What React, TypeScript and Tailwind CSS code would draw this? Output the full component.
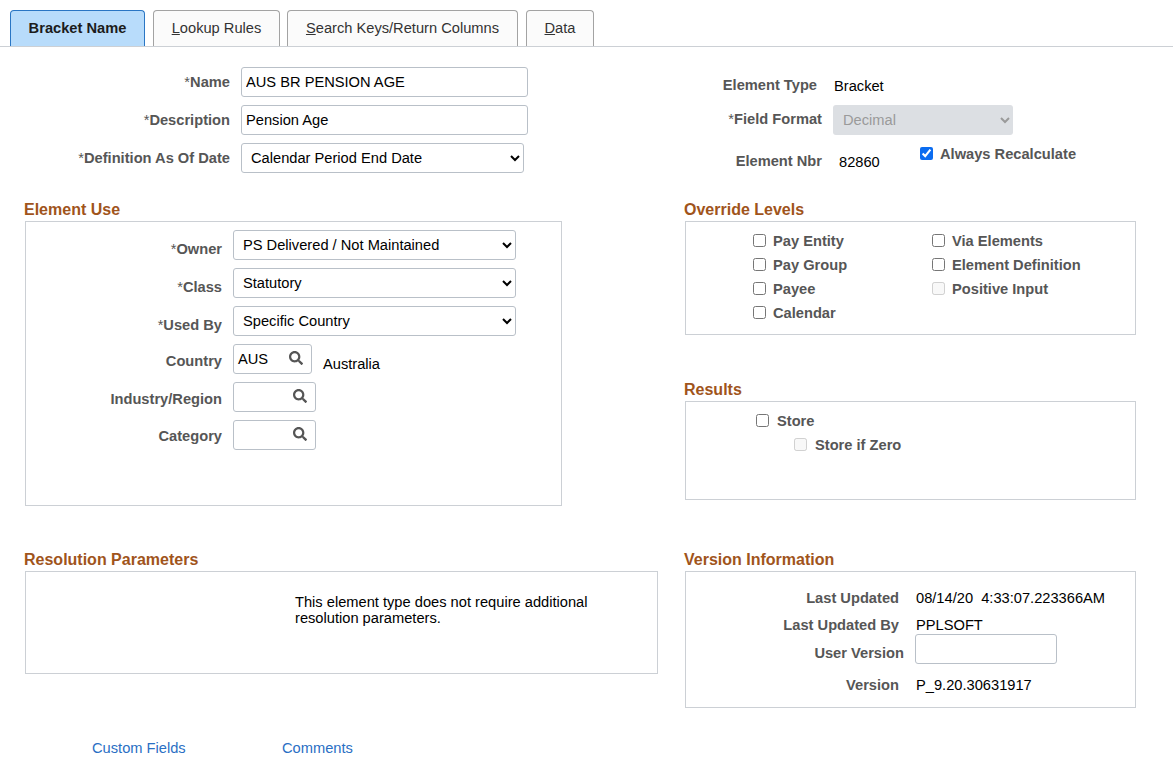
import { FaSearch } from "react-icons/fa";

const labelCls = "text-[14.67px] leading-4 font-bold text-[#565656] text-right shrink-0";
const valueCls = "text-[14.67px] leading-4 text-black";
const fieldCls = "h-[30px] border border-[#b9c0c8] rounded-[3px] bg-white text-[14.67px] text-black";
const headingCls = "-ml-px h-[18px] mb-[3px] text-[16px] leading-[20px] font-bold text-[#a0541b]";
const boxCls = "border border-[#ccd0d5]";

function Req() {
  return <span className="font-normal">*</span>;
}

function Tab({ active, hot, rest, width }: { active?: boolean; hot?: string; rest: string; width: string }) {
  return (
    <div
      className={`${width} h-[36px] pb-[2px] flex items-center justify-center rounded-t-[4px] border border-b-0 text-[14.67px] ${
        active ? "bg-[#b8dcfb] border-[#2a76c4] font-bold text-[#1c1c1c]" : "bg-[#fbfbfb] border-[#a3a3a3] text-[#333]"
      }`}
    >
      {hot && <u>{hot}</u>}
      {rest}
    </div>
  );
}

function Select({ value, width }: { value: string; width: string }) {
  return (
    <select defaultValue={value} className={`${fieldCls} ${width} pl-[5px]`}>
      <option>{value}</option>
    </select>
  );
}

function Lookup({ value, width }: { value?: string; width: string }) {
  return (
    <div className={`${fieldCls} ${width} flex items-center pl-1 shrink-0`}>
      <span className="flex-1 text-[14.67px] leading-4 -mt-[1px]">{value}</span>
      <FaSearch className="mr-2 -mt-[3px] text-[14px] text-[#555]" />
    </div>
  );
}

function Check({ label, disabled, checked, className }: { label: string; disabled?: boolean; checked?: boolean; className?: string }) {
  return (
    <label className={`flex items-center h-[24px] ${className ?? ""}`}>
      <input type="checkbox" disabled={disabled} defaultChecked={checked} className="w-[13px] h-[13px] -mt-[2px] accent-[#0b6cf0]" />
      <span className="ml-[7px] text-[14.67px] leading-4 font-bold text-[#565656]">{label}</span>
    </label>
  );
}

function UseRow({ label, required, offset, children }: { label: string; required?: boolean; offset: string; children: React.ReactNode }) {
  return (
    <div className="flex items-center h-[30px] mb-2">
      <span className={`${labelCls} w-[196px] mr-[11px] ${offset}`}>
        {required && <Req />}
        {label}
      </span>
      {children}
    </div>
  );
}

function InfoRow({ label, value, className }: { label: string; value: string; className: string }) {
  return (
    <div className={`flex ${className}`}>
      <span className={`${labelCls} w-[213px] mr-[17px]`}>{label}</span>
      <span className={`${valueCls} whitespace-pre`}>{value}</span>
    </div>
  );
}

export default function App() {
  return (
    <div className="w-[1173px] h-[760px] overflow-hidden bg-white font-['Liberation_Sans',Arial,sans-serif]">
      <div className="flex h-[47px] pt-[10px] pl-[10px] gap-2 border-b border-[#ccd0d5]">
        <Tab active rest="Bracket Name" width="w-[135px]" />
        <Tab hot="L" rest="ookup Rules" width="w-[127px]" />
        <Tab hot="S" rest="earch Keys/Return Columns" width="w-[231px] -ml-px" />
        <Tab hot="D" rest="ata" width="w-[68px]" />
      </div>

      <div className="grid grid-cols-[660px_451px] pl-[25px]">
        {/* top form, left */}
        <div className="h-[153px] pt-5 flex flex-col gap-2">
          <div className="flex items-center">
            <span className={`${labelCls} w-[205px] mr-[11px]`}><Req />Name</span>
            <input defaultValue="AUS BR PENSION AGE" className={`${fieldCls} w-[287px] px-1`} />
          </div>
          <div className="flex items-center">
            <span className={`${labelCls} w-[205px] mr-[11px] -mt-px`}><Req />Description</span>
            <input defaultValue="Pension Age" className={`${fieldCls} w-[287px] px-1`} />
          </div>
          <div className="flex items-center">
            <span className={`${labelCls} w-[205px] mr-[11px] -mt-px`}><Req />Definition As Of Date</span>
            <Select value="Calendar Period End Date" width="w-[283px]" />
          </div>
        </div>

        {/* top form, right */}
        <div className="h-[153px] pt-[30px]">
          <div className="flex h-[28px]">
            <span className={`${labelCls} w-[132px] mr-[17px]`}>Element Type</span>
            <span className={`${valueCls} mt-px`}>Bracket</span>
          </div>
          <div className="flex items-center">
            <span className={`${labelCls} w-[137px] mr-[11px] -mt-[3px]`}><Req />Field Format</span>
            <select disabled defaultValue="Decimal" className="w-[180px] h-[30px] pl-[6px] rounded-[3px] bg-[#dcdfe3] text-[14.67px] text-[#9a9a9a] opacity-100">
              <option>Decimal</option>
            </select>
          </div>
          <div className="flex items-start">
            <span className={`${labelCls} w-[137px] mr-[17px] mt-[18px]`}>Element Nbr</span>
            <span className={`${valueCls} w-[81px] mt-[19px]`}>82860</span>
            <Check label="Always Recalculate" checked className="mt-[7px]" />
          </div>
        </div>

        {/* element use */}
        <div className="h-[306px]">
          <div className={headingCls}>Element Use</div>
          <div className={`${boxCls} w-[537px] h-[285px] pt-2`}>
            <UseRow required label="Owner" offset="mt-2">
              <Select value="PS Delivered / Not Maintained" width="w-[283px]" />
            </UseRow>
            <UseRow required label="Class" offset="mt-2">
              <Select value="Statutory" width="w-[283px]" />
            </UseRow>
            <UseRow required label="Used By" offset="mt-2">
              <Select value="Specific Country" width="w-[283px]" />
            </UseRow>
            <UseRow label="Country" offset="mt-[3px]">
              <Lookup value="AUS" width="w-[79px]" />
              <span className={`${valueCls} ml-[11px] mt-[10px]`}>Australia</span>
            </UseRow>
            <UseRow label="Industry/Region" offset="mt-[3px]">
              <Lookup width="w-[83px]" />
            </UseRow>
            <UseRow label="Category" offset="mt-px">
              <Lookup width="w-[83px]" />
            </UseRow>
          </div>
        </div>

        {/* override levels and results */}
        <div className="h-[306px]">
          <div className={headingCls}>Override Levels</div>
          <div className={`${boxCls} h-[114px] pt-[7px] pl-[67px] grid grid-cols-[179px_1fr] content-start`}>
            <Check label="Pay Entity" />
            <Check label="Via Elements" />
            <Check label="Pay Group" />
            <Check label="Element Definition" />
            <Check label="Payee" />
            <Check label="Positive Input" disabled />
            <Check label="Calendar" />
          </div>
          <div className={`${headingCls} mt-[45px]`}>Results</div>
          <div className={`${boxCls} h-[99px] pt-[7px] pl-[70px]`}>
            <Check label="Store" className="[&>span]:ml-2" />
            <Check label="Store if Zero" disabled className="ml-[38px] [&>span]:ml-2" />
          </div>
        </div>

        {/* resolution parameters */}
        <div className="pt-[44px]">
          <div className={headingCls}>Resolution Parameters</div>
          <div className={`${boxCls} w-[633px] h-[103px] pt-[22px] pl-[269px]`}>
            <p className="w-[320px] text-[14.67px] leading-4 text-black">
              This element type does not require additional resolution parameters.
            </p>
          </div>
        </div>

        {/* version information */}
        <div className="pt-[44px]">
          <div className={headingCls}>Version Information</div>
          <div className={`${boxCls} h-[137px] pt-[18px]`}>
            <InfoRow label="Last Updated" value="08/14/20  4:33:07.223366AM" className="h-[27px]" />
            <InfoRow label="Last Updated By" value="PPLSOFT" className="h-[17px]" />
            <div className="flex items-center h-[30px]">
              <span className={`${labelCls} w-[218px] mr-[11px] mt-[8px]`}>User Version</span>
              <input className={`${fieldCls} w-[142px] px-1`} />
            </div>
            <InfoRow label="Version" value="P_9.20.30631917" className="mt-[13px]" />
          </div>
        </div>
      </div>

      <div className="flex pl-[92px] pt-8 text-[14.67px] leading-4 text-[#2a6fc4]">
        <a className="w-[190px]">Custom Fields</a>
        <a>Comments</a>
      </div>
    </div>
  );
}
